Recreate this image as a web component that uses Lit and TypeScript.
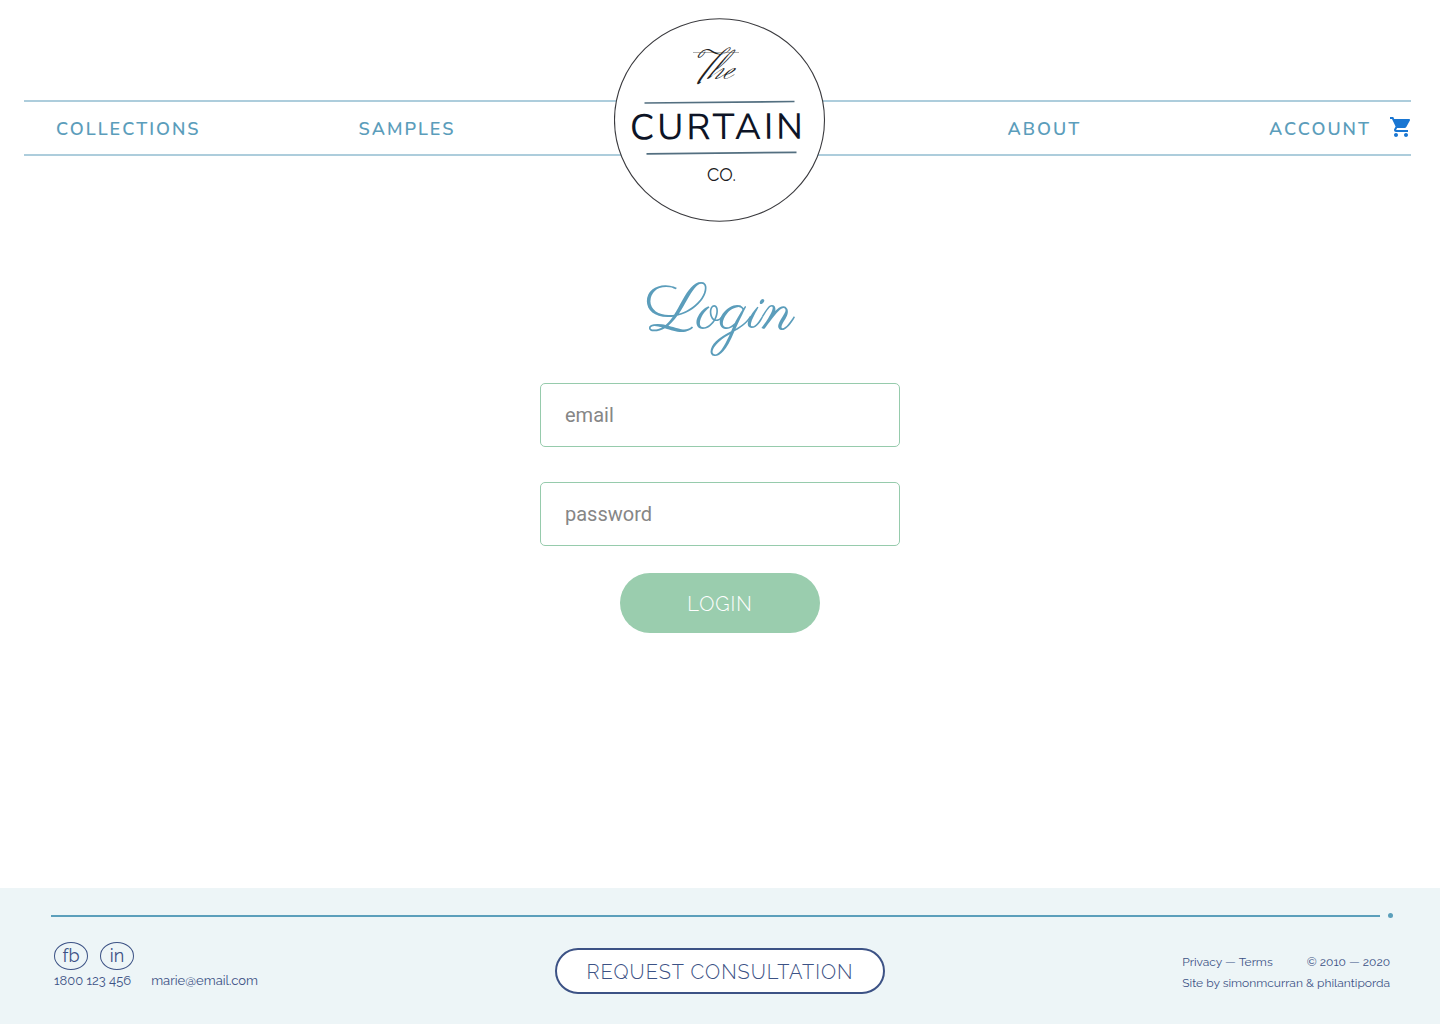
import { LitElement, html, css } from "lit";
import { customElement } from "lit/decorators.js";

@customElement("site-header")
class SiteHeader extends LitElement {
  static styles = css`
    :host {
      display: block;
    }
    .header {
      display: grid;
      padding-top: 18px;
    }
    .bar {
      grid-area: 1 / 1;
      align-self: start;
      box-sizing: border-box;
      margin: 82px 29px 0 24px;
      padding: 2px 0 0 32px;
      border-top: 2px solid #adcddc;
      border-bottom: 2px solid #adcddc;
      height: 56px;
      display: grid;
      grid-template-columns: 1fr 1fr;
      column-gap: 548px;
      align-items: center;
    }
    .group {
      display: flex;
      justify-content: space-between;
      align-items: center;
    }
    .group:first-child {
      padding-right: 4px;
    }
    .account {
      display: flex;
      align-items: center;
      gap: 18px;
    }
    a {
      color: #5b9dbb;
      text-decoration: none;
    }
    .link {
      font: 600 18px/24px Nunito, "Nunito Sans", Lato, sans-serif;
      letter-spacing: 2px;
    }
    .cart {
      display: block;
      width: 24px;
      height: 24px;
      margin: -4px -2px 0 0;
    }
    .logo {
      grid-area: 1 / 1;
      justify-self: center;
      display: block;
    }
    .logo svg {
      display: block;
    }
    .script {
      font: 400 42px "Herr Von Muellerhoff", Parisienne, "Liberation Serif", serif;
    }
    .name {
      font: 400 36px "Nunito Sans", Nunito, Lato, sans-serif;
      letter-spacing: 3px;
    }
    .co {
      font: 400 18px Raleway, Lato, sans-serif;
    }
  `;

  render() {
    return html`
      <header class="header">
        <nav class="bar" aria-label="Main">
          <div class="group">
            <a class="link" href="#collections">COLLECTIONS</a>
            <a class="link" href="#samples">SAMPLES</a>
          </div>
          <div class="group">
            <a class="link" href="#about">ABOUT</a>
            <div class="account">
              <a class="link" href="#account">ACCOUNT</a>
              <a href="#cart" aria-label="Cart">
                <svg class="cart" viewBox="0 0 24 24" fill="#1976d2">
                  <path d="M7 18c-1.1 0-1.99.9-1.99 2S5.900 22 7 22s2-.9 2-2-.9-2-2-2zM1 2v2h2l3.600 7.590-1.350 2.450c-.16.28-.25.61-.25.96 0 1.100.9 2 2 2h12v-2H7.420c-.14 0-.25-.11-.25-.25l.03-.12.9-1.630h7.450c.75 0 1.410-.41 1.750-1.030l3.580-6.490c.08-.14.12-.31.12-.48 0-.55-.45-1-1-1H5.210l-.94-2H1zm16 16c-1.100 0-1.990.9-1.990 2s.89 2 1.990 2 2-.9 2-2-.9-2-2-2z" />
                </svg>
              </a>
            </div>
          </div>
        </nav>
        <a class="logo" href="#home" aria-label="The Curtain Co.">
          <svg width="212" height="204" viewBox="0 0 212 204">
            <ellipse cx="105.500" cy="102" rx="105" ry="101.200" fill="#fff" stroke="#3a3a3e" stroke-width="1.100" />
            <path d="M79 34.500H125" stroke="#777" stroke-width=".6" />
            <text class="script" x="83" y="61" fill="#222">The</text>
            <path d="M30.500 85L180.500 83.500M32.500 135.800L182.500 134.300" stroke="#536f80" stroke-width="1.700" />
            <text class="name" x="16" y="121" fill="#0d1426" transform="rotate(-.3 105 110)">CURTAIN</text>
            <text class="co" x="93" y="163" fill="#1c1c22">CO.</text>
          </svg>
        </a>
      </header>
    `;
  }
}

@customElement("login-form")
class LoginForm extends LitElement {
  static styles = css`
    :host {
      display: block;
    }
    .form {
      display: flex;
      flex-direction: column;
      align-items: center;
      padding: 51px 24px;
    }
    .title {
      margin: 0 0 30px;
      font: 400 64px/80px Parisienne, "Liberation Serif", serif;
      color: #5b9dbb;
    }
    .field {
      box-sizing: border-box;
      width: 100%;
      max-width: 360px;
      height: 64px;
      margin-bottom: 35px;
      padding: 0 24px;
      border: 1px solid #96cbac;
      border-radius: 5px;
      background: #fff;
      color: #444;
      font: 400 20px/24px Roboto, sans-serif;
      outline: none;
    }
    .field::placeholder {
      color: #868686;
      opacity: 1;
    }
    .submit {
      width: 200px;
      height: 60px;
      margin-top: -8px;
      padding: 2px 0 0;
      border: 0;
      border-radius: 30px;
      background: #9acdae;
      color: #fff;
      font: 300 20px/24px Raleway, Lato, sans-serif;
      letter-spacing: 1px;
    }
  `;

  render() {
    return html`
      <form class="form" @submit=${(e: Event) => e.preventDefault()}>
        <h1 class="title">Login</h1>
        <input class="field" type="email" placeholder="email" aria-label="email" />
        <input class="field" type="password" placeholder="password" aria-label="password" />
        <button class="submit" type="submit">LOGIN</button>
      </form>
    `;
  }
}

@customElement("site-footer")
class SiteFooter extends LitElement {
  static styles = css`
    :host {
      display: block;
      background: #edf5f7;
    }
    .footer {
      padding: 25px 50px 24px;
      color: #3c5285;
      font: 400 12px/21px Raleway, "Open Sans", sans-serif;
    }
    .divider {
      display: flex;
      align-items: center;
      gap: 8px;
      margin: 0 -3px 0 1px;
    }
    .line {
      flex: 1;
      height: 2px;
      background: #5b9fbb;
    }
    .dot {
      width: 5px;
      height: 5px;
      border-radius: 50%;
      background: #5b9fbb;
    }
    .row {
      display: grid;
      grid-template-columns: 1fr auto 1fr;
      align-items: center;
      min-height: 58px;
      padding-top: 24px;
    }
    a {
      color: inherit;
      text-decoration: none;
    }
    .reach {
      align-self: start;
      padding-left: 4px;
    }
    .social {
      display: flex;
      gap: 12px;
    }
    .badge {
      box-sizing: border-box;
      width: 34px;
      height: 28px;
      border: 1px solid #3c5285;
      border-radius: 50%;
      text-align: center;
      font: 400 18px/25px Raleway, Lato, sans-serif;
    }
    .contact {
      display: flex;
      gap: 20px;
      font-size: 13px;
    }
    .consult {
      height: 46px;
      padding: 2px 30px 0;
      border: 2px solid #3c5285;
      border-radius: 23px;
      background: #fff;
      color: #3c5285;
      font: 300 20px/24px Raleway, Lato, sans-serif;
      letter-spacing: 1px;
    }
    .legal {
      justify-self: end;
      padding-top: 3px;
    }
    .terms {
      display: flex;
      justify-content: space-between;
    }
  `;

  render() {
    return html`
      <footer class="footer">
        <div class="divider"><span class="line"></span><span class="dot"></span></div>
        <div class="row">
          <div class="reach">
            <div class="social">
              <a class="badge" href="#fb">fb</a>
              <a class="badge" href="#in">in</a>
            </div>
            <div class="contact">
              <a href="tel:1800123456">1800 123 456</a>
              <a href="mailto:marie@email.com">marie@email.com</a>
            </div>
          </div>
          <button class="consult" type="button">REQUEST CONSULTATION</button>
          <div class="legal">
            <div class="terms">
              <span><a href="#privacy">Privacy</a> — <a href="#terms">Terms</a></span>
              <span>© 2010 — 2020</span>
            </div>
            <div>Site by simonmcurran &amp; philantiporda</div>
          </div>
        </div>
      </footer>
    `;
  }
}

@customElement("app-root")
class AppRoot extends LitElement {
  static styles = css`
    :host {
      display: flex;
      flex-direction: column;
      min-height: 100vh;
      background: #fff;
    }
    .main {
      flex: 1;
    }
  `;

  render() {
    return html`
      <site-header></site-header>
      <main class="main"><login-form></login-form></main>
      <site-footer></site-footer>
    `;
  }
}
